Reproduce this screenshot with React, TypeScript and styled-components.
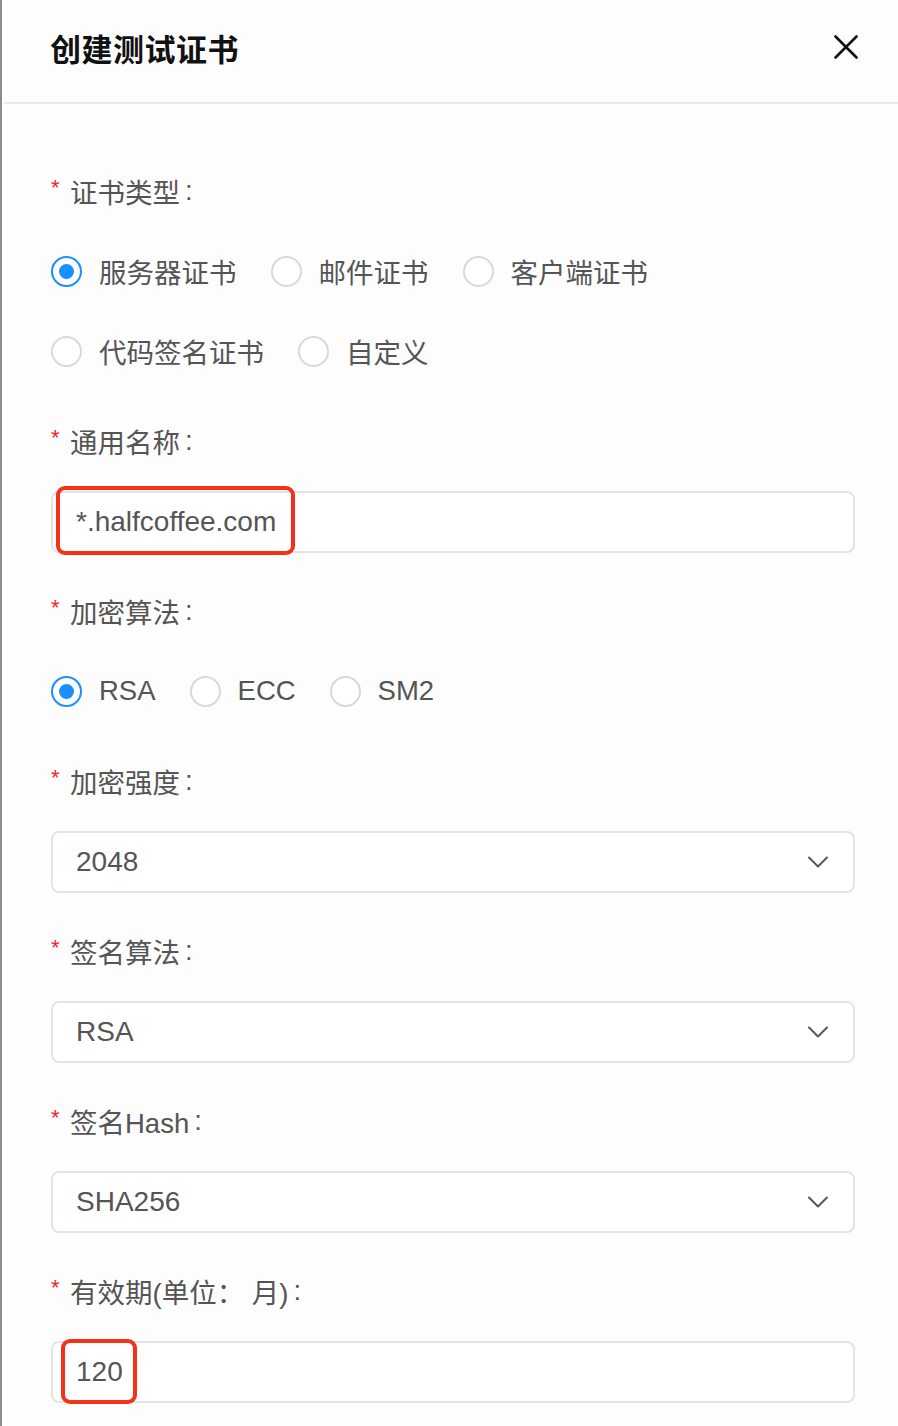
import styled, { createGlobalStyle } from "styled-components";

const GlobalStyle = createGlobalStyle`
    html, body {
        margin: 0;
        padding: 0;
        background: #fdfdfd;
    }
    * {
        box-sizing: border-box;
    }
`;

type Option = { label: string; checked?: boolean };

const certTypes: Option[][] = [
    [{ label: "服务器证书", checked: true }, { label: "邮件证书" }, { label: "客户端证书" }],
    [{ label: "代码签名证书" }, { label: "自定义" }],
];

const algorithms: Option[] = [{ label: "RSA", checked: true }, { label: "ECC" }, { label: "SM2" }];

const Chevron = () => (
    <svg width="22" height="14" viewBox="0 0 22 14" fill="none">
        <path d="M2 2.5 L11 11.5 L20 2.5" stroke="#555" strokeWidth="2" strokeLinecap="round" strokeLinejoin="round" />
    </svg>
);

const CloseIcon = () => (
    <svg width="24" height="24" viewBox="0 0 24 24" fill="none">
        <path d="M1.5 1.5 L22.5 22.5 M22.5 1.5 L1.5 22.5" stroke="#111" strokeWidth="2.6" strokeLinecap="round" />
    </svg>
);

const RadioRow = ({ options }: { options: Option[] }) => (
    <Row>
        {options.map((o) => (
            <RadioItem key={o.label}>
                <Circle $checked={!!o.checked} />
                <span>{o.label}</span>
            </RadioItem>
        ))}
    </Row>
);

const SelectField = ({ value }: { value: string }) => (
    <Field>
        <span>{value}</span>
        <Chevron />
    </Field>
);

const App = () => {
    return (
        <>
            <GlobalStyle />
            <Panel>
                <Header>
                    <Title>创建测试证书</Title>
                    <CloseButton>
                        <CloseIcon />
                    </CloseButton>
                </Header>
                <Body>
                    <FormItem>
                        <Label>证书类型</Label>
                        <RadioGroup>
                            {certTypes.map((row, i) => (
                                <RadioRow key={i} options={row} />
                            ))}
                        </RadioGroup>
                    </FormItem>

                    <FormItem>
                        <Label>通用名称</Label>
                        <Field>
                            <span>*.halfcoffee.com</span>
                            <Highlight style={{ left: 3, top: -7, width: 239, height: 69 }} />
                        </Field>
                    </FormItem>

                    <FormItem>
                        <Label>加密算法</Label>
                        <RadioGroup>
                            <RadioRow options={algorithms} />
                        </RadioGroup>
                    </FormItem>

                    <FormItem>
                        <Label>加密强度</Label>
                        <SelectField value="2048" />
                    </FormItem>

                    <FormItem>
                        <Label>签名算法</Label>
                        <SelectField value="RSA" />
                    </FormItem>

                    <FormItem>
                        <Label>签名Hash</Label>
                        <SelectField value="SHA256" />
                    </FormItem>

                    <FormItem>
                        <Label>有效期(单位： 月)</Label>
                        <Field>
                            <span>120</span>
                            <Highlight style={{ left: 8, top: -4, width: 76, height: 65 }} />
                        </Field>
                    </FormItem>
                </Body>
            </Panel>
        </>
    );
};

export default App;

const Panel = styled.div`
    width: 898px;
    min-height: 1426px;
    border-left: 2px solid #8c8c8c;
    background: #fdfdfd;
    font-family: "Liberation Sans", "Noto Sans CJK SC", sans-serif;
    color: #555;
`;

const Header = styled.div`
    height: 104px;
    display: flex;
    align-items: center;
    justify-content: space-between;
    padding: 0 40px 8px 46px;
    margin-left: 2px;
    border-bottom: 2px solid #e8e8e8;
`;

const Title = styled.h1`
    margin: 0;
    font-family: "Noto Sans CJK SC", sans-serif;
    font-size: 31px;
    font-weight: 700;
    color: #111;
    letter-spacing: 0.5px;
`;

const CloseButton = styled.div`
    display: flex;
    width: 24px;
    height: 24px;
`;

const Body = styled.div`
    padding: 57px 43px 0 49px;
`;

const FormItem = styled.div`
    margin-bottom: 28px;
`;

const Label = styled.div`
    height: 60px;
    margin-bottom: 20px;
    display: flex;
    align-items: center;
    font-size: 27.5px;
    color: #555;

    &::before {
        content: "*";
        color: #f5222d;
        font-family: "Liberation Sans", sans-serif;
        font-size: 22px;
        width: 19px;
        align-self: center;
        margin-top: -6px;
    }

    &::after {
        content: ":";
        font-family: "Liberation Sans", sans-serif;
        margin-left: 5px;
    }
`;

const RadioGroup = styled.div`
    display: flex;
    flex-direction: column;
    gap: 20px;
    padding-bottom: 2px;
`;

const Row = styled.div`
    height: 60px;
    display: flex;
    align-items: center;
    gap: 34px;
`;

const RadioItem = styled.label`
    display: flex;
    align-items: center;
    gap: 17px;
    font-size: 27.5px;
    color: #555;
`;

const Circle = styled.span<{ $checked: boolean }>`
    width: 31px;
    height: 31px;
    border-radius: 50%;
    border: 2px solid ${(p) => (p.$checked ? "#1890ff" : "#d9d9d9")};
    background: #fff;
    display: flex;
    align-items: center;
    justify-content: center;

    &::after {
        content: "";
        display: ${(p) => (p.$checked ? "block" : "none")};
        width: 15px;
        height: 15px;
        border-radius: 50%;
        background: #1890ff;
    }
`;

const Field = styled.div`
    position: relative;
    height: 62px;
    display: flex;
    align-items: center;
    justify-content: space-between;
    padding: 0 24px 0 23px;
    border: 2px solid #e4e4e4;
    border-radius: 8px;
    background: #fff;
    font-size: 28px;
    color: #555;
`;

const Highlight = styled.div`
    position: absolute;
    border: 4px solid #f5311a;
    border-radius: 9px;
    pointer-events: none;
`;
